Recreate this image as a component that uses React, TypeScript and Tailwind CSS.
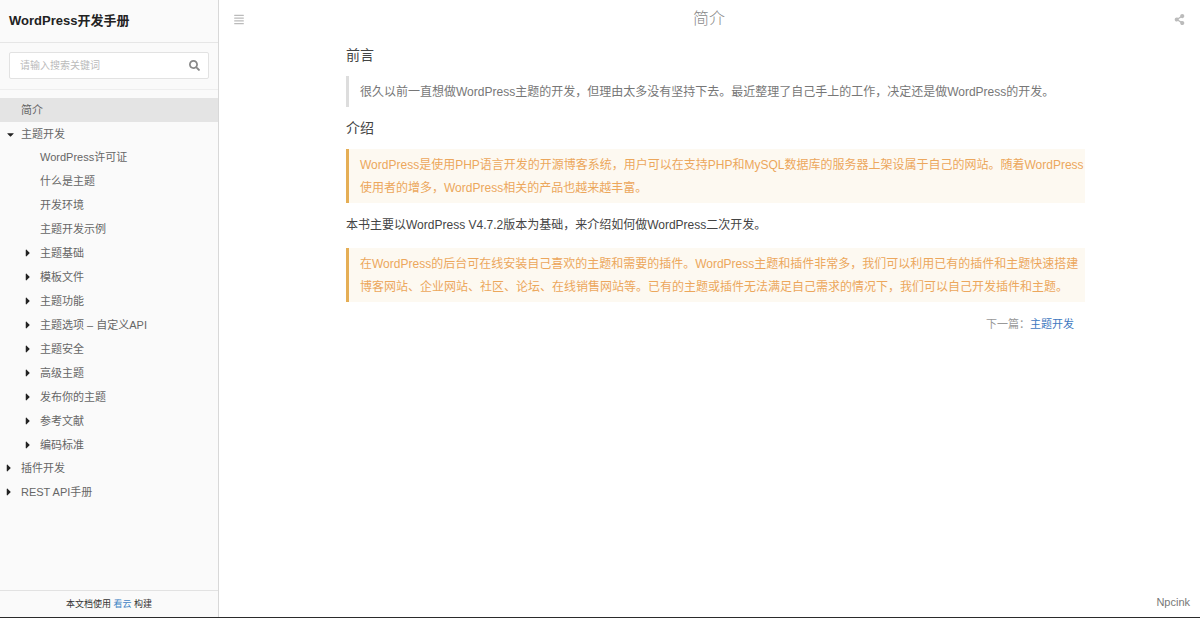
import { FaAlignJustify, FaSearch, FaShareAlt, FaCaretRight, FaCaretDown } from 'react-icons/fa';

type Item = {
  title: string;
  active?: boolean;
  branch?: boolean;
  children?: Item[];
};

const menu: Item[] = [
  { title: '简介', active: true },
  {
    title: '主题开发',
    branch: true,
    children: [
      { title: 'WordPress许可证' },
      { title: '什么是主题' },
      { title: '开发环境' },
      { title: '主题开发示例' },
      { title: '主题基础', branch: true },
      { title: '模板文件', branch: true },
      { title: '主题功能', branch: true },
      { title: '主题选项 – 自定义API', branch: true },
      { title: '主题安全', branch: true },
      { title: '高级主题', branch: true },
      { title: '发布你的主题', branch: true },
      { title: '参考文献', branch: true },
      { title: '编码标准', branch: true },
    ],
  },
  { title: '插件开发', branch: true },
  { title: 'REST API手册', branch: true },
];

function MenuItem({ item, nested = false }: { item: Item; nested?: boolean }) {
  const Caret = item.children ? FaCaretDown : FaCaretRight;

  return (
    <li>
      <a
        href="#"
        aria-current={item.active ? 'page' : undefined}
        className={`flex h-6 items-center text-[11px] text-[#666] ${nested ? 'pl-6' : 'pl-[5px]'} ${
          item.active ? 'bg-[#e4e4e4]' : ''
        }`}
      >
        <span className="flex w-4 shrink-0 text-[#222]">
          {item.branch && <Caret className={item.children ? 'h-[11px] w-auto' : 'h-3 w-2'} />}
        </span>
        <span>{item.title}</span>
      </a>
      {item.children && (
        <ul className="-my-px">
          {item.children.map((child) => (
            <MenuItem key={child.title} item={child} nested />
          ))}
        </ul>
      )}
    </li>
  );
}

function Sidebar() {
  return (
    <aside className="flex w-[219px] shrink-0 flex-col border-r border-[#d8d8d8] bg-[#fafafa]">
      <h1 className="border-b border-[#e6e6e6] px-[9px] py-[11px] text-[13px] leading-5 font-bold text-[#222]">
        WordPress开发手册
      </h1>
      <form className="border-b border-[#eee] px-[9px] pt-[9px] pb-[10px]">
        <div className="flex h-[27px] items-center rounded-xs border border-[#e2e2e2] bg-white pr-2 pl-[10px]">
          <input
            type="text"
            aria-label="搜索"
            placeholder="请输入搜索关键词"
            className="min-w-0 flex-1 text-[10px] text-[#666] outline-none placeholder:text-[#bbb]"
          />
          <button type="submit" aria-label="搜索" className="text-[#888]">
            <FaSearch className="h-[11px] w-[11px]" />
          </button>
        </div>
      </form>
      <nav className="min-h-0 flex-1 overflow-hidden pt-2">
        <ul>
          {menu.map((item) => (
            <MenuItem key={item.title} item={item} />
          ))}
        </ul>
      </nav>
      <footer className="border-t border-[#e2e2e2] py-[3px] text-center text-[9px] leading-5 text-[#333]">
        本文档使用{' '}
        <a href="#" className="text-[#4183c4]">
          看云
        </a>{' '}
        构建
      </footer>
    </aside>
  );
}

function Warning({ children }: { children: string }) {
  return (
    <blockquote className="border-l-3 border-[#e5ae55] bg-[#fdf9f1] pt-[5px] pb-[3px] pl-[11px] text-[#eca75c]">
      {children}
    </blockquote>
  );
}

export default function App() {
  return (
    <div className="flex h-screen border-b border-[#2b2b2b] bg-white font-['Liberation_Sans','Noto_Sans_CJK_SC',sans-serif]">
      <Sidebar />
      <main className="flex min-w-0 flex-1 flex-col">
        <header className="flex h-[38px] items-center justify-between px-[15px] text-[#bbb]">
          <button type="button" aria-label="目录">
            <FaAlignJustify className="h-[11px] w-[10px]" />
          </button>
          <h2 className="text-base font-light text-[#888]">简介</h2>
          <button type="button" aria-label="分享">
            <FaShareAlt className="h-[11px] w-[11px]" />
          </button>
        </header>

        <article className="mx-auto mt-[5px] flex w-full max-w-[751px] flex-col gap-[11px] pl-3 text-xs leading-[23px] text-[#444]">
          <div className="flex flex-col gap-[9px]">
            <h3 className="text-sm leading-6">前言</h3>
            <blockquote className="border-l-3 border-[#ddd] pt-[5px] pb-[3px] pl-[11px] text-[#777]">
              很久以前一直想做WordPress主题的开发，但理由太多没有坚持下去。最近整理了自己手上的工作，决定还是做WordPress的开发。
            </blockquote>
            <h3 className="text-sm leading-6">介绍</h3>
            <Warning>
              WordPress是使用PHP语言开发的开源博客系统，用户可以在支持PHP和MySQL数据库的服务器上架设属于自己的网站。随着WordPress使用者的增多，WordPress相关的产品也越来越丰富。
            </Warning>
          </div>
          <p>本书主要以WordPress V4.7.2版本为基础，来介绍如何做WordPress二次开发。</p>
          <Warning>
            在WordPress的后台可在线安装自己喜欢的主题和需要的插件。WordPress主题和插件非常多，我们可以利用已有的插件和主题快速搭建博客网站、企业网站、社区、论坛、在线销售网站等。已有的主题或插件无法满足自己需求的情况下，我们可以自己开发插件和主题。
          </Warning>
          <p className="pr-[11px] text-right text-[11px] text-[#999]">
            下一篇：
            <a href="#" className="text-[#4078c0]">
              主题开发
            </a>
          </p>
        </article>

        <p className="mt-auto px-[10px] pb-[5px] text-right text-[11px] leading-5 text-[#777]">Npcink</p>
      </main>
    </div>
  );
}
